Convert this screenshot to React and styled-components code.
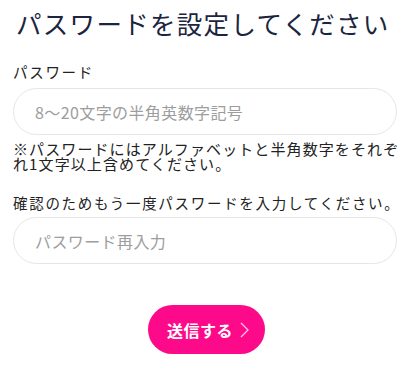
import styled, { createGlobalStyle } from 'styled-components';

const GlobalStyle = createGlobalStyle`
  body {
    margin: 0;
    background: #ffffff;
    font-family: 'Noto Sans CJK JP', 'Noto Sans', sans-serif;
  }
`;

const App = () => {
  return (
    <>
      <GlobalStyle />
      <Page>
        <Title>パスワードを設定してください</Title>
        <Label>パスワード</Label>
        <Input type='password' placeholder='8〜20文字の半角英数字記号' />
        <Note>
          ※パスワードにはアルファベットと半角数字をそれぞれ1文字以上含めてください。
        </Note>
        <Label $spaced>確認のためもう一度パスワードを入力してください。</Label>
        <Input type='password' placeholder='パスワード再入力' />
        <ButtonRow>
          <SubmitButton type='button'>
            送信する
            <Chevron width='9' height='16' viewBox='0 0 9 16'>
              <path d='M1 1 L8 8 L1 15' fill='none' stroke='#ffc2e2' strokeWidth='1.3' />
            </Chevron>
          </SubmitButton>
        </ButtonRow>
      </Page>
    </>
  );
};

const Page = styled.main`
  padding: 6px 10px 0 13px;
  display: flex;
  flex-direction: column;
`;

const Title = styled.h1`
  margin: 0 0 0 3px;
  font-size: 25.5px;
  line-height: 34px;
  font-weight: 400;
  letter-spacing: 1.3px;
  color: #1b2440;
  white-space: nowrap;
`;

const Label = styled.label`
  display: block;
  margin: ${(p) => (p.$spaced ? '22px 0 4px' : '22px 0 6px')};
  font-size: 14.5px;
  line-height: 20px;
  letter-spacing: 1.7px;
  color: #222;
  white-space: nowrap;
`;

const Input = styled.input`
  box-sizing: border-box;
  width: 384px;
  height: 47px;
  padding: 0 21px;
  border: 1px solid #e6e6e8;
  border-radius: 24px;
  background: #fff;
  font-family: inherit;
  font-size: 16px;
  letter-spacing: 0.4px;
  color: #333;
  outline: none;

  &::placeholder {
    color: #9d9d9d;
  }
`;

const Note = styled.p`
  margin: 6px 0 0;
  font-size: 15px;
  line-height: 15px;
  letter-spacing: 1.1px;
  color: #222;
`;

const ButtonRow = styled.div`
  display: flex;
  justify-content: center;
  margin-top: 41px;
  padding-right: 3px;
`;

const SubmitButton = styled.button`
  display: flex;
  align-items: center;
  justify-content: center;
  gap: 7px;
  width: 117px;
  height: 49px;
  padding: 0 0 0 4px;
  border: none;
  border-radius: 25px;
  background: #fd0a8a;
  color: #fff;
  font-family: inherit;
  font-size: 16px;
  font-weight: 700;
  letter-spacing: 0.5px;
  cursor: pointer;
`;

const Chevron = styled.svg`
  display: block;
`;

export default App;
